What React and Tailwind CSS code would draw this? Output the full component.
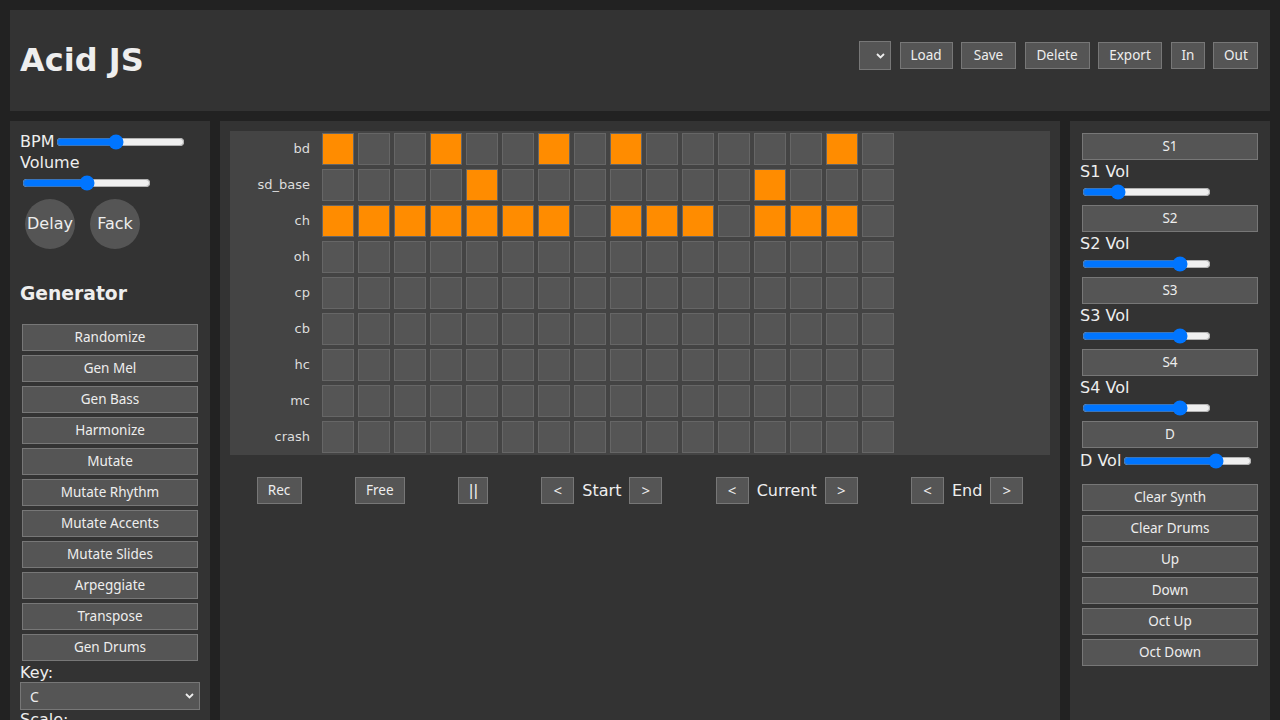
import React from 'react';

const rows = [
    ['bd', [0, 3, 6, 8, 14]],
    ['sd_base', [4, 12]],
    ['ch', [0, 1, 2, 3, 4, 5, 6, 8, 9, 10, 12, 13, 14]],
    ['oh', []],
    ['cp', []],
    ['cb', []],
    ['hc', []],
    ['mc', []],
    ['crash', []],
];

const genButtons = [
    'Randomize', 'Gen Mel', 'Gen Bass', 'Harmonize', 'Mutate', 'Mutate Rhythm',
    'Mutate Accents', 'Mutate Slides', 'Arpeggiate', 'Transpose', 'Gen Drums',
];

function Btn({ children, className = '' }) {
    return (
        <button className={`h-[27px] px-[10px] bg-[#555] border border-[#777] text-[#eee] text-[13.5px] leading-none font-['Noto_Sans',sans-serif] ${className}`}>
            {children}
        </button>
    );
}

function Chevron() {
    return (
        <svg width="9" height="6" viewBox="0 0 9 6" className="pointer-events-none absolute top-1/2 -translate-y-1/2 right-[6px]">
            <path d="M1 1 L4.5 4.5 L8 1" fill="none" stroke="#eee" strokeWidth="1.8" />
        </svg>
    );
}

function Slider({ value, className = '' }) {
    return <input type="range" defaultValue={value} className={`w-[129px] h-[16px] m-[2px] ${className}`} />;
}

function VolBlock({ name, value }) {
    return (
        <div>
            <Btn className="block w-[176px] m-[2px]">{name}</Btn>
            <div className="leading-[19px] text-[16px]">{name} Vol</div>
            <div className="h-[22px] flex items-center">
                <Slider value={value} />
            </div>
        </div>
    );
}

function Arrow({ children }) {
    return (
        <Btn className="w-[33px] px-0">
            <span className="text-[15px]">{children}</span>
        </Btn>
    );
}

export default function App() {
    return (
        <div className="min-h-screen bg-[#222] text-[#eee] font-['DejaVu_Sans',sans-serif] pt-[10px]">
            {/* header */}
            <header className="mx-[10px] h-[101px] bg-[#333] flex justify-between items-start pt-[31px] pl-[10px] pr-[12px]">
                <h1 className="text-[32px] font-bold leading-[37px] mt-[1px]">Acid JS</h1>
                <div className="flex items-center gap-[8.5px]">
                    <div className="relative w-[32px] h-[29px]">
                        <select className="appearance-none w-full h-full bg-[#555] border border-[#777]" />
                        <Chevron />
                    </div>
                    <Btn className="w-[53px] px-0">Load</Btn>
                    <Btn className="w-[55px] px-0">Save</Btn>
                    <Btn className="w-[65px] px-0">Delete</Btn>
                    <Btn className="w-[64px] px-0">Export</Btn>
                    <Btn className="w-[34px] px-0">In</Btn>
                    <Btn className="w-[45px] px-0">Out</Btn>
                </div>
            </header>

            <main className="flex gap-[10px] px-[10px] mt-[10px]">
                {/* left panel */}
                <aside className="w-[200px] shrink-0 bg-[#333] p-[10px] pb-[40px]">
                    <div className="h-[22px] flex items-center text-[16px]">
                        <span>BPM</span>
                        <Slider value={46} />
                    </div>
                    <div className="leading-[19px] text-[16px]">Volume</div>
                    <div className="h-[22px] flex items-center">
                        <Slider value={50} />
                    </div>
                    <div className="flex gap-[5px]">
                        <button className="w-[50px] h-[50px] m-[5px] rounded-full bg-[#555] text-[16px] text-[#eee]">Delay</button>
                        <button className="w-[50px] h-[50px] m-[5px] rounded-full bg-[#555] text-[16px] text-[#eee]">Fack</button>
                    </div>
                    <h3 className="text-[18.72px] font-bold leading-[22px] mt-[29px] mb-[19px]">Generator</h3>
                    <div className="flex flex-col gap-[4px] mb-[2px]">
                        {genButtons.map((b) => (
                            <Btn key={b} className="w-[176px] mx-[2px]">{b}</Btn>
                        ))}
                    </div>
                    <div className="leading-[19px] text-[16px]">Key:</div>
                    <div className="relative w-[180px] h-[28px]">
                        <select defaultValue="C" className="appearance-none w-full h-full bg-[#555] border border-[#777] pl-[9px] text-[14px] font-['Noto_Sans',sans-serif]">
                            <option>C</option>
                        </select>
                        <Chevron />
                    </div>
                    <div className="leading-[19px] text-[16px]">Scale:</div>
                    <div className="relative w-[180px] h-[28px]">
                        <select defaultValue="Minor" className="appearance-none w-full h-full bg-[#555] border border-[#777] pl-[9px] text-[14px] font-['Noto_Sans',sans-serif]">
                            <option>Minor</option>
                        </select>
                        <Chevron />
                    </div>
                </aside>

                {/* center panel */}
                <section className="flex-1 bg-[#333] p-[10px]">
                    <div className="bg-[#444]">
                        {rows.map(([name, on]) => (
                            <div key={name} className="flex items-center">
                                <div className="w-[90px] pr-[10px] text-right text-[13px] text-[#ddd]">{name}</div>
                                {Array.from({ length: 16 }, (_, i) => (
                                    <div
                                        key={i}
                                        className={`w-[32px] h-[32px] m-[2px] border border-[#666] ${on.includes(i) ? 'bg-[#ff8c00]' : 'bg-[#555]'}`}
                                    />
                                ))}
                            </div>
                        ))}
                    </div>
                    <div className="flex justify-around items-center mt-[22px]">
                        <Btn className="w-[45px] px-0">Rec</Btn>
                        <Btn className="w-[50px] px-0">Free</Btn>
                        <Btn className="w-[30px] px-0">
                            <span className="font-['Liberation_Sans',sans-serif] text-[16px] tracking-[0.5px]">||</span>
                        </Btn>
                        <div className="flex items-center gap-[8px]">
                            <Arrow>&lt;</Arrow>
                            <span className="text-[16px]">Start</span>
                            <Arrow>&gt;</Arrow>
                        </div>
                        <div className="flex items-center gap-[8px]">
                            <Arrow>&lt;</Arrow>
                            <span className="text-[16px]">Current</span>
                            <Arrow>&gt;</Arrow>
                        </div>
                        <div className="flex items-center gap-[8px]">
                            <Arrow>&lt;</Arrow>
                            <span className="text-[16px]">End</span>
                            <Arrow>&gt;</Arrow>
                        </div>
                    </div>
                </section>

                {/* right panel */}
                <aside className="w-[200px] shrink-0 bg-[#333] p-[10px]">
                    <VolBlock name="S1" value={25} />
                    <VolBlock name="S2" value={80} />
                    <VolBlock name="S3" value={80} />
                    <VolBlock name="S4" value={80} />
                    <Btn className="block w-[176px] m-[2px]">D</Btn>
                    <div className="h-[22px] flex items-center text-[16px]">
                        <span>D Vol</span>
                        <Slider value={75} />
                    </div>
                    <div className="flex flex-col gap-[4px] mt-[12px]">
                        {['Clear Synth', 'Clear Drums', 'Up', 'Down', 'Oct Up', 'Oct Down'].map((b) => (
                            <Btn key={b} className="w-[176px] mx-[2px]">{b}</Btn>
                        ))}
                    </div>
                </aside>
            </main>
        </div>
    );
}
